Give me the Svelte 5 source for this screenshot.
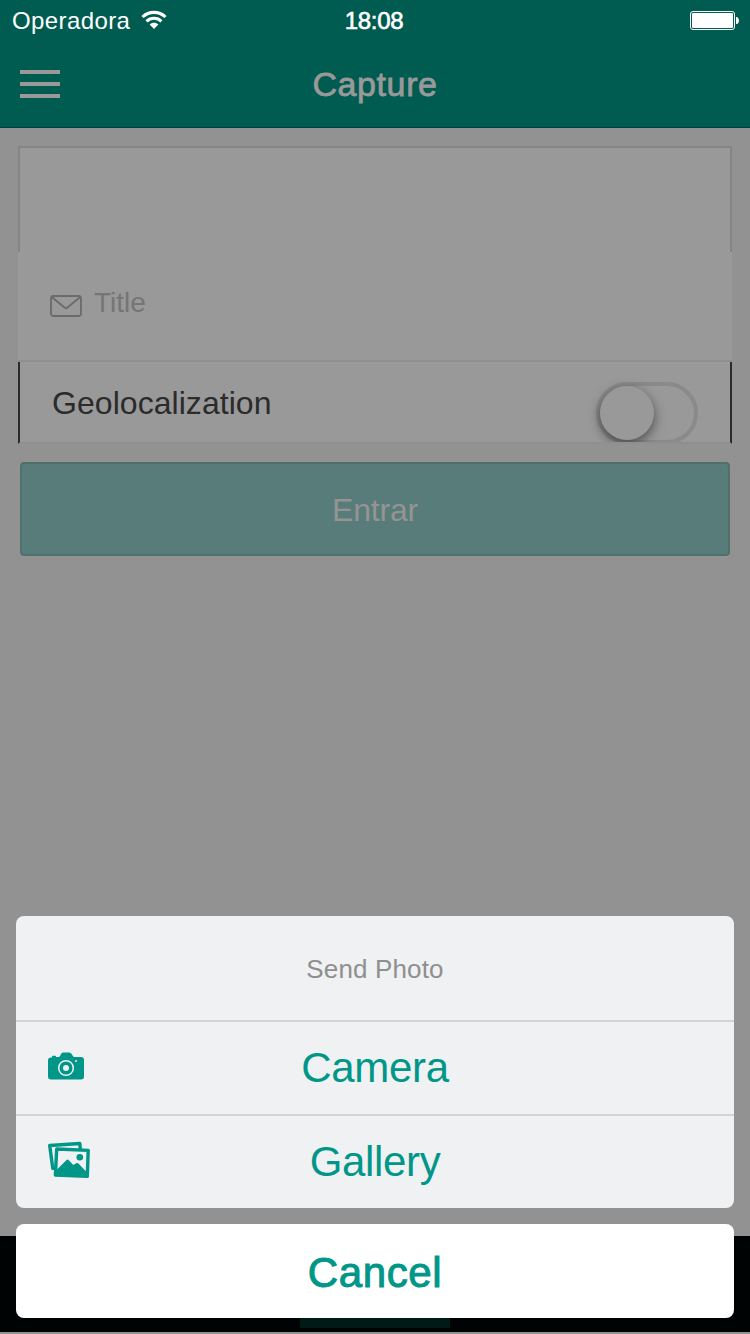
<script>
  let geolocalization = $state(false);
</script>

<div class="screen">
  <header>
    <div class="status">
      <div class="carrier">
        <span>Operadora</span>
        <svg class="wifi" width="26" height="20" viewBox="0 0 26 20">
          <g fill="none" stroke="#fff" stroke-width="3.1">
            <path d="M1.500 7C8 .8 18 .8 24.500 7" />
            <path d="M5.500 11.300C9.700 7.300 16.300 7.300 20.500 11.300" />
          </g>
          <path d="M8.600 14.600C11 12 15 12 17.400 14.600L13 19Z" fill="#fff" />
        </svg>
      </div>
      <time>18:08</time>
      <div class="power">
        <svg width="50" height="22" viewBox="0 0 50 22">
          <rect x=".5" y="1.5" width="44" height="18" rx="2.5" fill="none" stroke="#fff" />
          <rect x="2" y="3" width="41" height="15" rx="1.2" fill="#fff" />
          <path d="M46 7h1q2 1 2 3.500t-2 3.500h-1z" fill="#fff" />
        </svg>
      </div>
    </div>
    <div class="nav">
      <button class="menu" aria-label="Menu"><i></i><i></i><i></i></button>
      <h1>Capture</h1>
      <span></span>
    </div>
  </header>

  <main>
    <div class="photo"></div>
    <label class="field">
      <svg width="32" height="24" viewBox="0 0 32 24" fill="none" stroke="#6b6b6b" stroke-width="1.8">
        <rect x="1" y="2" width="30" height="20" rx="2.500" />
        <path d="M1.700 3L14.800 13.800Q16 14.800 17.200 13.800L30.300 3" />
      </svg>
      <span>Title</span>
    </label>
    <div class="geo">
      <span>Geolocalization</span>
      <button class="toggle" class:on={geolocalization} aria-label="Geolocalization" onclick={() => (geolocalization = !geolocalization)}>
        <i></i>
      </button>
    </div>
    <button class="submit">Entrar</button>
  </main>

  <footer><div class="tab"></div></footer>

  <section class="sheet">
    <div class="group">
      <div class="title">Send Photo</div>
      <button class="option">
        <svg width="36" height="28" viewBox="0 0 36 28">
          <path d="M3 5.500H4V4.600Q4 3.800 5 3.800H7Q8 3.800 8 4.600V5H10.500Q11.500 5 12.200 3.700L13 2Q13.600.5 15 .5H21Q22.400.5 23.200 1.500L25.300 4.400Q25.800 5 27 5H33Q36 5 36 8V24.500Q36 27.500 33 27.500H3Q0 27.500 0 24.500V8.500Q0 5.500 3 5.500Z" fill="#009688" />
          <circle cx="18" cy="16" r="7.300" fill="none" stroke="#eff1f3" stroke-width="1.500" />
          <circle cx="18" cy="16" r="3" fill="#eff1f3" />
          <circle cx="28" cy="9" r="1" fill="#eff1f3" />
        </svg>
        <span>Camera</span>
      </button>
      <button class="option">
        <svg width="42" height="38" viewBox="0 0 42 38">
          <path d="M8 26.500L4.800 27.400 1.700 4.500 31.800 2.500 32.300 8" fill="none" stroke="#009688" stroke-width="3.400" stroke-linejoin="round" />
          <path d="M8.700 8L40.200 9.400 39.300 35.400 7.400 34Z" fill="#eff1f3" stroke="#009688" stroke-width="3.400" stroke-linejoin="round" />
          <path d="M7.500 30L18.300 19.200Q19.600 18 20.800 19.300L25.300 24 28.200 22.300Q29.800 21.800 30.700 22.700L39.500 32V35.500L7 34.500Z" fill="#009688" />
          <circle cx="31.800" cy="16.200" r="3.300" fill="#009688" />
        </svg>
        <span>Gallery</span>
      </button>
    </div>
    <button class="cancel">Cancel</button>
  </section>
</div>

<style>
  :global(body) { margin: 0; }
  * { box-sizing: border-box; }
  button { font: inherit; margin: 0; padding: 0; border: 0; background: none; color: inherit; }
  svg { display: block; }
  .screen {
    position: relative; width: 750px; height: 1334px; overflow: hidden;
    display: flex; flex-direction: column; background: #929292;
    font-family: "Liberation Sans", Arial, sans-serif;
  }
  header { height: 128px; background: #005b50; border-bottom: 1px solid #003f38; }
  .status { display: grid; grid-template-columns: 1fr auto 1fr; height: 40px; padding: 2px 10px 0 12px; align-items: center; color: #fff; font-size: 24px; line-height: 38px; }
  .carrier { display: flex; align-items: center; gap: 11px; letter-spacing: .4px; }
  .wifi { margin-top: -3px; }
  .status time { letter-spacing: -.3px; -webkit-text-stroke: .6px #fff; margin-left: -4px; }
  .power { display: flex; justify-content: flex-end; }
  .nav { height: 87px; padding: 0 20px; display: grid; grid-template-columns: 40px 1fr 40px; }
  .menu { display: flex; flex-direction: column; gap: 8px; padding-top: 30px; width: 40px; }
  .menu i { height: 4px; background: #999; }
  h1 { margin: 0; text-align: center; font-size: 34px; font-weight: 400; line-height: 88px; letter-spacing: .6px; color: #999; -webkit-text-stroke: .8px #999; }
  main { flex: 1; display: flex; flex-direction: column; padding: 18px 18px 0; }
  .photo { height: 106px; background: #999; border: 2px solid #858585; border-bottom: 0; }
  .field { height: 110px; background: #999; border-bottom: 2px solid #8f8f8f; display: flex; align-items: center; gap: 12px; padding-left: 32px; color: #757575; font-size: 28px; }
  .field span { position: relative; top: -3px; }
  .geo { height: 82px; background: #999; border: 2px solid #2b2b2b; border-top: 0; border-bottom-color: #8f8f8f; display: flex; align-items: flex-start; justify-content: space-between; padding: 20px 32px 0; overflow: hidden; color: #2b2b2b; font-size: 32px; }
  .geo span { line-height: 42px; letter-spacing: .05px; }
  .toggle { flex: none; width: 102px; height: 62px; border: 4px solid #8a8a8a; border-radius: 31px; display: flex; justify-content: flex-start; }
  .toggle i { width: 54px; height: 54px; border-radius: 50%; background: #999; box-shadow: 0 4px 12px rgba(0, 0, 0, .5); }
  .toggle.on { justify-content: flex-end; background: #005b50; }
  .submit { height: 94px; margin: 18px 2px 0; background: #587c79; border: 2px solid #526f6c; border-radius: 4px; color: #949494; font-size: 32px; line-height: 92px; letter-spacing: -.2px; }
  footer { height: 96px; margin-bottom: 2px; padding-bottom: 4px; background: #000304; display: flex; justify-content: center; }
  .tab { width: 150px; background: #001a17; }
  .sheet { position: absolute; left: 16px; right: 16px; bottom: 16px; display: flex; flex-direction: column; gap: 16px; color: #009688; }
  .group { height: 292px; background: #eff1f3; border-radius: 8px; overflow: hidden; }
  .title { height: 104px; line-height: 106px; text-align: center; font-size: 26px; letter-spacing: .15px; color: #8f8f8f; }
  .option { width: 100%; height: 94px; padding: 0 32px; border-top: 2px solid #d1d3d6; display: grid; grid-template-columns: 42px 1fr 42px; align-items: center; font-size: 42px; letter-spacing: -.35px; }
  .option span { line-height: 92px; text-align: center; }
  .option svg { position: relative; top: -2px; }
  .cancel { height: 94px; padding-top: 3px; border-radius: 8px; background: #fff; font-size: 42px; line-height: 91px; letter-spacing: .6px; -webkit-text-stroke: 1px #009688; }
</style>
